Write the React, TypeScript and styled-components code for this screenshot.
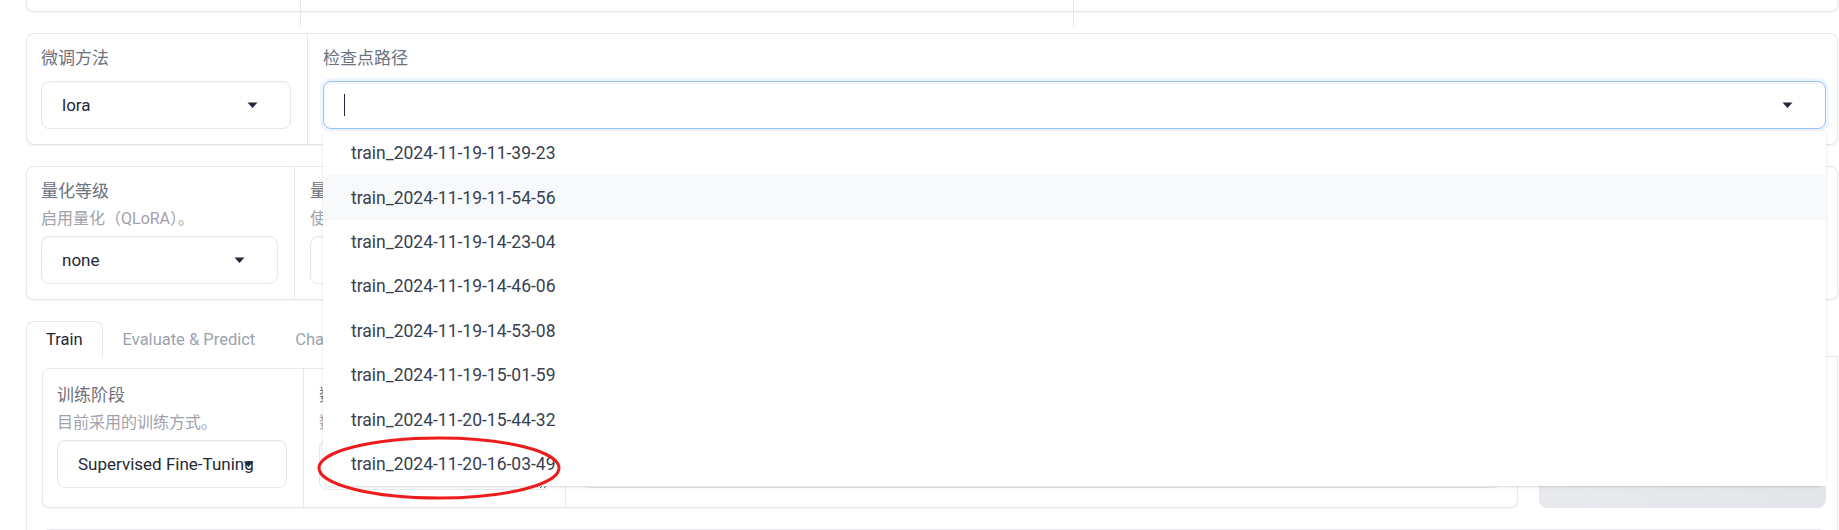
import styled, { createGlobalStyle } from "styled-components"

const GlobalStyle = createGlobalStyle`
  body {
    margin: 0;
    background: #ffffff;
    overflow: hidden;
    font-family: Roboto, "Noto Sans CJK SC", sans-serif;
  }
  * {
    box-sizing: border-box;
  }
`

const checkpoints = [
  "train_2024-11-19-11-39-23",
  "train_2024-11-19-11-54-56",
  "train_2024-11-19-14-23-04",
  "train_2024-11-19-14-46-06",
  "train_2024-11-19-14-53-08",
  "train_2024-11-19-15-01-59",
  "train_2024-11-20-15-44-32",
  "train_2024-11-20-16-03-49",
]

const tabs = ["Train", "Evaluate & Predict", "Chat", "Export"]

function Arrow (): JSX.Element {
  return (
    <ArrowIcon width="11" height="7" viewBox="0 0 11 7">
      <path d="M0.5 0.5 L10.5 0.5 L5.5 6 Z" fill="#1f2937" />
    </ArrowIcon>
  )
}

function Select ({ value }: { value: string }): JSX.Element {
  return (
    <SelectBox>
      <SelectValue>{value}</SelectValue>
      <Arrow />
    </SelectBox>
  )
}

function App (): JSX.Element {
  return (
    <Page>
      <GlobalStyle />

      <TopCard>
        <Column $w={273} />
        <Column $w={773} />
        <Column />
      </TopCard>

      <Card>
        <Column $w={280}>
          <Label>微调方法</Label>
          <Select value="lora" />
        </Column>
        <Column>
          <Label>检查点路径</Label>
          <ComboWrap>
            <SelectBox $focused>
              <Caret />
              <SelectValue />
              <Arrow />
            </SelectBox>
            <Options>
              {checkpoints.map((name, i) => (
                <Option key={name} $active={i === 1}>{name}</Option>
              ))}
            </Options>
          </ComboWrap>
        </Column>
      </Card>

      <Card>
        <Column $w={267}>
          <Label>量化等级</Label>
          <Info>启用量化（QLoRA）。</Info>
          <Select value="none" />
        </Column>
        <Column $w={300}>
          <Label>量化方法</Label>
          <Info>使用的量化方法。</Info>
          <Select value="bitsandbytes" />
        </Column>
        <Column>
          <Label>对话模板</Label>
          <Info>构建提示词时使用的模板。</Info>
          <Select value="default" />
        </Column>
      </Card>

      <TabSection>
        <TabNav>
          {tabs.map((t, i) => (
            <Tab key={t} $selected={i === 0}>{t}</Tab>
          ))}
        </TabNav>
        <TabPanel>
          <PanelRow>
            <InnerCard>
              <Column $w={260} $pt={14} $pb={17}>
                <Label>训练阶段</Label>
                <Info>目前采用的训练方式。</Info>
                <Select value="Supervised Fine-Tuning" />
              </Column>
              <Column $w={262} $pt={14} $pb={17}>
                <Label>数据路径</Label>
                <Info>数据文件夹的路径。</Info>
                <TextArea readOnly value="data" />
              </Column>
              <Column $pt={14} $pb={17}>
                <Label>数据集</Label>
                <Info>&nbsp;</Info>
                <Select value="" />
              </Column>
            </InnerCard>
            <GrayButton>预览数据集</GrayButton>
          </PanelRow>
          <BottomCard>
            <Column />
            <Column />
            <Column />
            <Column />
            <Column />
          </BottomCard>
        </TabPanel>
      </TabSection>

      <Annotation width="246" height="68" viewBox="0 0 246 68">
        <ellipse cx="123" cy="34" rx="120" ry="30" fill="none" stroke="#ec1c1c" strokeWidth="3" />
      </Annotation>
    </Page>
  )
}

export default App

const Page = styled.div`
  position: relative;
  width: 1839px;
  height: 530px;
  overflow: hidden;
  padding-left: 26px;
  display: flex;
  flex-direction: column;
  gap: 21px;
`

const TopCard = styled.div`
  width: 1812px;
  height: 12px;
  flex-shrink: 0;
  display: flex;
  border: 1px solid #e5e7eb;
  border-top: none;
  border-radius: 0 0 8px 8px;
  box-shadow: 0 1px 2px rgba(0, 0, 0, 0.05);
`

const Card = styled.div`
  width: 1812px;
  flex-shrink: 0;
  display: flex;
  background: #ffffff;
  border: 1px solid #e5e7eb;
  border-radius: 8px;
  box-shadow: 0 1px 2px rgba(0, 0, 0, 0.05);
`

const Column = styled.div<{ $w?: number, $pt?: number, $pb?: number }>`
  ${(props) => (props.$w ? `width: ${props.$w}px; flex-shrink: 0;` : "flex: 1; min-width: 0;")}
  display: flex;
  flex-direction: column;
  padding: ${(props) => props.$pt ?? 12}px 16px ${(props) => props.$pb ?? 15}px 14px;
  & + & {
    border-left: 1px solid #e5e7eb;
    padding-left: 15px;
  }
`

const Label = styled.div`
  font-size: 17px;
  line-height: 24px;
  color: #6b7280;
  margin-bottom: 11px;
  white-space: nowrap;
`

const Info = styled.div`
  font-size: 16px;
  line-height: 20px;
  color: #a1a1aa;
  margin: -5px 0 7px;
  white-space: nowrap;
`

const SelectBox = styled.div<{ $focused?: boolean }>`
  height: 48px;
  display: flex;
  align-items: center;
  padding-left: 20px;
  background: #ffffff;
  border: 1px solid ${(props) => (props.$focused ? "#93c5fd" : "#e5e7eb")};
  border-radius: 8px;
  box-shadow: ${(props) =>
    props.$focused
      ? "0 0 0 3px #eef5ff, inset 0 2px 3px rgba(0, 0, 0, 0.05)"
      : "inset 0 1px 2px rgba(0, 0, 0, 0.04)"};
`

const SelectValue = styled.span`
  flex: 1;
  min-width: 0;
  font-size: 17px;
  color: #1f2937;
  white-space: nowrap;
`

const ArrowIcon = styled.svg`
  flex-shrink: 0;
  margin: 1px 32px 0 -8px;
`

const Caret = styled.span`
  width: 1px;
  height: 22px;
  background: #1f2937;
`

const ComboWrap = styled.div`
  position: relative;
  margin-right: -5px;
`

const Options = styled.div`
  position: absolute;
  top: calc(100% + 2px);
  left: 0;
  right: 0;
  z-index: 5;
  background: #ffffff;
  border-radius: 0 0 8px 8px;
  box-shadow: 0 1px 3px rgba(0, 0, 0, 0.12), 0 1px 2px -1px rgba(0, 0, 0, 0.1);
`

const Option = styled.div<{ $active: boolean }>`
  height: 44.4px;
  display: flex;
  align-items: center;
  padding-left: 28px;
  font-size: 17.5px;
  color: #374151;
  background: ${(props) => (props.$active ? "#f8f9fb" : "#ffffff")};
`

const TabSection = styled.div`
  width: 1812px;
  flex-shrink: 0;
  display: flex;
  flex-direction: column;
`

const TabNav = styled.div`
  display: flex;
  height: 36px;
  border-bottom: 1px solid #e5e7eb;
`

const Tab = styled.div<{ $selected: boolean }>`
  height: 36px;
  padding: 0 19px;
  display: flex;
  align-items: center;
  font-size: 16.5px;
  color: ${(props) => (props.$selected ? "#1f2937" : "#9ca3af")};
  background: #ffffff;
  border: 1px solid ${(props) => (props.$selected ? "#e5e7eb" : "transparent")};
  border-bottom: none;
  border-radius: 8px 8px 0 0;
  margin-bottom: -1px;
  white-space: nowrap;
`

const TabPanel = styled.div`
  border: 1px solid #e5e7eb;
  border-top: none;
  padding: 11px 11px 0 15px;
  display: flex;
  flex-direction: column;
  gap: 21px;
  height: 200px;
`

const PanelRow = styled.div`
  display: flex;
  gap: 21px;
`

const InnerCard = styled(Card)`
  flex: 1;
  width: auto;
  min-width: 0;
`

const GrayButton = styled.div`
  width: 287px;
  flex-shrink: 0;
  display: flex;
  align-items: center;
  justify-content: center;
  font-size: 16px;
  color: #374151;
  border-radius: 8px;
  border: 1px solid #e5e7eb;
  background: linear-gradient(to bottom right, #eceef1, #e3e5ea);
`

const TextArea = styled.textarea`
  height: 50px;
  resize: vertical;
  padding: 13px 20px;
  font-family: Roboto, "Noto Sans CJK SC", sans-serif;
  font-size: 17px;
  color: #1f2937;
  border: 1px solid #e5e7eb;
  border-radius: 8px;
  outline: none;
  box-shadow: inset 0 1px 2px rgba(0, 0, 0, 0.04);
`

const BottomCard = styled(Card)`
  width: auto;
  height: 60px;
`

const Annotation = styled.svg`
  position: absolute;
  left: 316px;
  top: 434px;
  z-index: 10;
`
